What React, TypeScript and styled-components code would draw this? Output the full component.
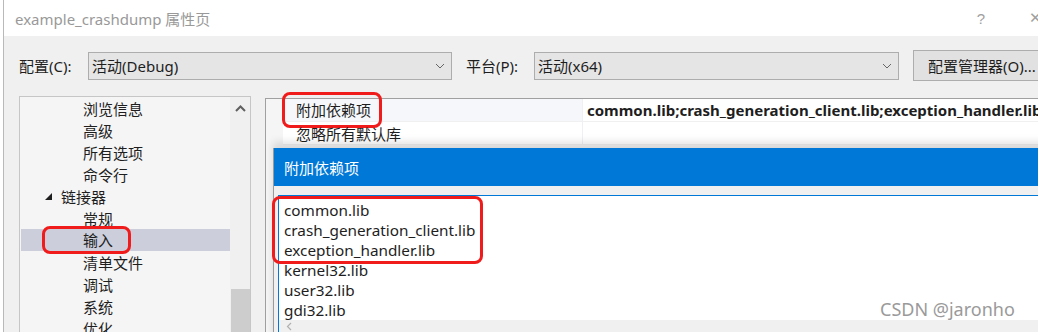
import React from "react";
import styled, { createGlobalStyle } from "styled-components";

const GlobalStyle = createGlobalStyle`
  html, body {
    margin: 0;
    padding: 0;
    background: #ffffff;
    overflow: hidden;
  }
  body {
    font-family: "Noto Sans", "Noto Sans CJK SC", sans-serif;
    color: #1e1e1e;
  }
`;

const Page = styled.div`
  position: relative;
  width: 1038px;
  height: 332px;
  overflow: hidden;
  padding-left: 3px;
  box-sizing: border-box;
`;

const Window = styled.div`
  width: 1100px;
  height: 332px;
  border-left: 1px solid #b9b9b9;
  display: flex;
  flex-direction: column;
  background: #f0f0f0;
`;

const TitleBar = styled.div`
  height: 36px;
  flex: none;
  background: #ffffff;
  display: flex;
  align-items: center;
  padding-left: 11px;
  font-size: 15px;
  color: #999999;
`;

const TitleText = styled.div`
  width: 939px;
`;

const TitleButton = styled.div`
  width: 54px;
  text-align: center;
  font-size: 15px;
  color: #a0a0a0;
  font-family: "Liberation Sans", sans-serif;
`;

const Toolbar = styled.div`
  display: flex;
  align-items: center;
  height: 31px;
  margin-top: 14px;
  padding-left: 15px;
  font-size: 15px;
`;

const Label = styled.div<{ $w: number }>`
  width: ${(p) => p.$w}px;
  flex: none;
`;

const Combo = styled.div<{ $w: number }>`
  width: ${(p) => p.$w}px;
  height: 28px;
  box-sizing: border-box;
  border: 1px solid #adadad;
  background: #e5e5e5;
  display: flex;
  align-items: center;
  padding-left: 3px;
  margin-right: 14px;
  flex: none;
`;

const ComboText = styled.div`
  flex: 1;
`;

const Chevron = styled.svg`
  width: 10px;
  height: 6px;
  margin-right: 6px;
`;

const Button = styled.div`
  height: 31px;
  box-sizing: border-box;
  border: 1px solid #adadad;
  background: #e1e1e1;
  display: flex;
  align-items: center;
  padding: 0 14px;
  white-space: nowrap;
`;

const Main = styled.div`
  position: relative;
  flex: 1;
  display: flex;
  align-items: flex-start;
  padding-left: 15px;
  margin-top: 15px;
`;

const Tree = styled.div`
  width: 232px;
  height: 260px;
  box-sizing: border-box;
  border: 1px solid #c6c6c6;
  border-bottom: none;
  background: #f5f5f5;
  display: flex;
  margin-right: 14px;
`;

const TreeList = styled.div`
  flex: 1;
  padding-left: 1px;
`;

const TreeItem = styled.div<{ $indent: number; $selected?: boolean }>`
  height: 22px;
  display: flex;
  align-items: center;
  padding-left: ${(p) => p.$indent}px;
  font-size: 15px;
  background: ${(p) => (p.$selected ? "#cccedb" : "transparent")};
`;

const Caret = styled.span`
  width: 0;
  height: 0;
  border-left: 7px solid transparent;
  border-bottom: 7px solid #1e1e1e;
  margin-right: 9px;
  margin-left: -19px;
`;

// red annotation box drawn over a label, padding pulled back by negative margins
const Marked = styled.span<{ $l: number; $r: number; $v: number }>`
  display: inline-block;
  padding: ${(p) => p.$v}px ${(p) => p.$r}px ${(p) => p.$v}px ${(p) => p.$l}px;
  margin: -${(p) => p.$v}px -${(p) => p.$r}px -${(p) => p.$v}px -${(p) => p.$l}px;
  line-height: 20px;
  border-radius: 5px;
  outline: 3px solid #f01c1c;
`;

const VScroll = styled.div`
  width: 20px;
  display: flex;
  flex-direction: column;
  align-items: center;
  background: #f0f0f0;
`;

const ScrollArrow = styled.svg`
  width: 11px;
  height: 7px;
  margin-top: 8px;
`;

const Thumb = styled.div`
  width: 19px;
  height: 60px;
  margin-top: 177px;
  background: #cdcdcd;
`;

const Grid = styled.div`
  flex: 1;
  height: 240px;
  margin-top: 2px;
  border-top: 1px solid #a0a0a0;
  border-left: 1px solid #a0a0a0;
  background: #f5f5f5;
  padding-left: 17px;
`;

const GridRow = styled.div<{ $tint: string }>`
  display: flex;
  height: 22px;
  background: ${(p) => p.$tint};
  font-size: 15px;
  border-bottom: 1px solid #f0f0f0;
`;

const NameCell = styled.div`
  width: 300px;
  box-sizing: border-box;
  padding-left: 13px;
  display: flex;
  align-items: center;
  border-right: 1px solid #eef0f4;
`;

const ValueCell = styled.div`
  flex: 1;
  background: #ffffff;
  padding-left: 4px;
  display: flex;
  align-items: center;
  font-weight: 700;
  font-size: 15px;
  white-space: nowrap;
`;

const Dialog = styled.div`
  position: absolute;
  left: 269px;
  top: 52px;
  width: 800px;
  height: 200px;
  background: #f0f0f0;
  border-left: 1px solid #9a9a9a;
  box-shadow: 0 -6px 8px rgba(0, 0, 0, 0.12);
  display: flex;
  flex-direction: column;
`;

const DialogTitle = styled.div`
  height: 38px;
  flex: none;
  background: #0078d7;
  color: #ffffff;
  font-size: 15px;
  display: flex;
  align-items: center;
  padding-left: 10px;
`;

const Editor = styled.div`
  margin-top: 9px;
  margin-left: 4px;
  flex: 1;
  background: #ffffff;
  border-top: 1px solid #0078d7;
  border-left: 1px solid #0078d7;
  display: flex;
  flex-direction: column;
`;

const Lines = styled.div`
  padding: 4px 0 0 5px;
  font-size: 15.3px;
  line-height: 20px;
  height: 120px;
`;

const Group = styled.div`
  display: inline-block;
  padding: 1px 5px 1px 9px;
  margin: -1px -5px -1px -9px;
  border-radius: 5px;
  outline: 3px solid #f01c1c;
`;

const HScroll = styled.div`
  height: 12px;
  background: #f0f0f0;
  display: flex;
  align-items: center;
  padding-left: 7px;
`;

const Watermark = styled.div`
  position: absolute;
  left: 880px;
  top: 297px;
  font-family: "Noto Sans", sans-serif;
  font-size: 18px;
  color: #9a9a9a;
  text-shadow: 0 0 2px #ffffff;
`;

const treeItems = [
  { text: "浏览信息", indent: 62 },
  { text: "高级", indent: 62 },
  { text: "所有选项", indent: 62 },
  { text: "命令行", indent: 62 },
  { text: "链接器", indent: 43, caret: true },
  { text: "常规", indent: 62 },
  { text: "输入", indent: 62, selected: true },
  { text: "清单文件", indent: 62 },
  { text: "调试", indent: 62 },
  { text: "系统", indent: 62 },
  { text: "优化", indent: 62 },
];

const libs = ["kernel32.lib", "user32.lib", "gdi32.lib"];

const App: React.FC = () => {
  return (
    <>
      <GlobalStyle />
      <Page>
        <Window>
          <TitleBar>
            <TitleText>example_crashdump 属性页</TitleText>
            <TitleButton>?</TitleButton>
            <TitleButton>✕</TitleButton>
          </TitleBar>
          <Toolbar>
            <Label $w={69}>配置(C):</Label>
            <Combo $w={364}>
              <ComboText>活动(Debug)</ComboText>
              <Chevron viewBox="0 0 10 6">
                <path d="M1 1 L5 5 L9 1" fill="none" stroke="#666" strokeWidth="1" />
              </Chevron>
            </Combo>
            <Label $w={68}>平台(P):</Label>
            <Combo $w={365}>
              <ComboText>活动(x64)</ComboText>
              <Chevron viewBox="0 0 10 6">
                <path d="M1 1 L5 5 L9 1" fill="none" stroke="#666" strokeWidth="1" />
              </Chevron>
            </Combo>
            <Button>配置管理器(O)...</Button>
          </Toolbar>
          <Main>
            <Tree>
              <TreeList>
                {treeItems.map((item) => (
                  <TreeItem key={item.text} $indent={item.indent} $selected={item.selected}>
                    {item.caret && <Caret />}
                    {item.selected ? (
                      <Marked $l={38} $r={15} $v={1}>
                        {item.text}
                      </Marked>
                    ) : (
                      item.text
                    )}
                  </TreeItem>
                ))}
              </TreeList>
              <VScroll>
                <ScrollArrow viewBox="0 0 11 7">
                  <path d="M1 6 L5.5 1.5 L10 6" fill="none" stroke="#606060" strokeWidth="2" />
                </ScrollArrow>
                <Thumb />
              </VScroll>
            </Tree>
            <Grid>
              <GridRow $tint="#f5f7fa">
                <NameCell>
                  <Marked $l={11} $r={8} $v={5}>
                    附加依赖项
                  </Marked>
                </NameCell>
                <ValueCell>common.lib;crash_generation_client.lib;exception_handler.lib</ValueCell>
              </GridRow>
              <GridRow $tint="#ffffff">
                <NameCell>忽略所有默认库</NameCell>
                <ValueCell />
              </GridRow>
            </Grid>
            <Dialog>
              <DialogTitle>附加依赖项</DialogTitle>
              <Editor>
                <Lines>
                  <Group>
                    <div>common.lib</div>
                    <div>crash_generation_client.lib</div>
                    <div>exception_handler.lib</div>
                  </Group>
                  {libs.map((l) => (
                    <div key={l}>{l}</div>
                  ))}
                </Lines>
                <HScroll>
                  <svg width="6" height="9" viewBox="0 0 6 9">
                    <path d="M5 1 L1.5 4.5 L5 8" fill="none" stroke="#b0b0b0" strokeWidth="1.2" />
                  </svg>
                </HScroll>
              </Editor>
            </Dialog>
          </Main>
        </Window>
        <Watermark>CSDN @jaronho</Watermark>
      </Page>
    </>
  );
};

export default App;
